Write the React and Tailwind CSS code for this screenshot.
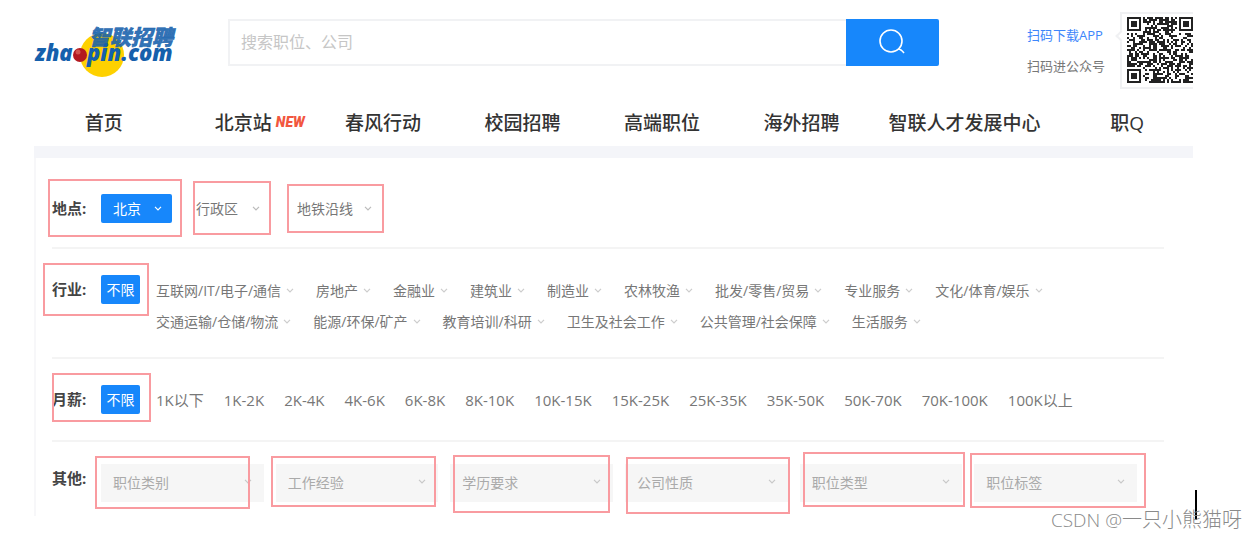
import React from 'react';

const navItems = [
  { name: '首页' },
  { name: '北京站', isNew: true },
  { name: '春风行动' },
  { name: '校园招聘' },
  { name: '高端职位' },
  { name: '海外招聘' },
  { name: '智联人才发展中心', wide: true },
  { name: '职Q' },
];

const industryRows = [
  ['互联网/IT/电子/通信', '房地产', '金融业', '建筑业', '制造业', '农林牧渔', '批发/零售/贸易', '专业服务', '文化/体育/娱乐'],
  ['交通运输/仓储/物流', '能源/环保/矿产', '教育培训/科研', '卫生及社会工作', '公共管理/社会保障', '生活服务'],
];

const salaries = [
  '1K以下', '1K-2K', '2K-4K', '4K-6K', '6K-8K', '8K-10K', '10K-15K',
  '15K-25K', '25K-35K', '35K-50K', '50K-70K', '70K-100K', '100K以上',
];

const otherFilters = ['职位类别', '工作经验', '学历要求', '公司性质', '职位类型', '职位标签'];

// Hand-drawn review marks that lie over the page
const marks = [
  'left-[48px] top-[179px] w-[134px] h-[58px]',
  'left-[193px] top-[181px] w-[78px] h-[54px]',
  'left-[287px] top-[184px] w-[97px] h-[49px]',
  'left-[43px] top-[263px] w-[106px] h-[53px]',
  'left-[52px] top-[373px] w-[99px] h-[49px]',
  'left-[95px] top-[456px] w-[155px] h-[53px]',
  'left-[271px] top-[456px] w-[165px] h-[51px]',
  'left-[453px] top-[455px] w-[157px] h-[58px]',
  'left-[626px] top-[457px] w-[164px] h-[57px]',
  'left-[803px] top-[452px] w-[162px] h-[55px]',
  'left-[970px] top-[453px] w-[176px] h-[55px]',
];

const Chevron = ({ className = '' }) => (
  <svg className={`pointer-events-none h-[5px] w-2 ${className}`} viewBox="0 0 8 5" fill="none" stroke="currentColor" strokeWidth="1.2">
    <path d="M1 0.8 L4 3.8 L7 0.8" />
  </svg>
);

const Logo = () => (
  <a href="#" aria-label="智联招聘" className="block">
    <svg className="block h-[60px] w-[148px]" viewBox="0 0 148 60">
      <circle cx="68" cy="34" r="22" fill="#fed100" />
      <text x="55" y="24" fontSize="21" fontWeight="900" fontStyle="italic" fill="#1560ac" fillOpacity="0.88" stroke="#1560ac" strokeWidth="0.5" fontFamily="'Noto Sans CJK SC', sans-serif">智联招聘</text>
      <text x="1" y="40" fontSize="22" fontWeight="800" fontStyle="italic" fill="#1560ac" fontFamily="'Open Sans', sans-serif">zha</text>
      <text x="53" y="40" fontSize="22" fontWeight="800" fontStyle="italic" fill="#1560ac" fontFamily="'Open Sans', sans-serif">pin.com</text>
      <circle cx="46" cy="34" r="7" fill="#b3191f" />
      <circle cx="44" cy="31" r="2.5" fill="#d2524c" />
    </svg>
  </a>
);

const QR_SIZE = 33;

const isFinder = (x, y) =>
  (x < 8 && y < 8) || (x >= QR_SIZE - 8 && y < 8) || (x < 8 && y >= QR_SIZE - 8);

const buildModules = () => {
  let seed = 20210;
  let d = '';
  for (let y = 0; y < QR_SIZE; y++) {
    for (let x = 0; x < QR_SIZE; x++) {
      seed = (seed * 1103515245 + 12345) % 2147483648;
      if (!isFinder(x, y) && seed / 2147483648 < 0.56) {
        d += `M${x} ${y}h1v1h-1z`;
      }
    }
  }
  return d;
};

const modules = buildModules();

const QrCode = () => (
  <svg className="block h-[66px] w-[66px]" viewBox="0 0 33 33" shapeRendering="crispEdges">
    <path d={modules} fill="#222" />
    {[[0, 0], [26, 0], [0, 26]].map(([x, y]) => (
      <g key={`${x}-${y}`} fill="#222">
        <rect x={x} y={y} width="7" height="7" />
        <rect x={x + 1} y={y + 1} width="5" height="5" fill="#fff" />
        <rect x={x + 2} y={y + 2} width="3" height="3" />
      </g>
    ))}
  </svg>
);

const FilterRow = ({ label, className, children }) => (
  <div className={`flex items-start ${className}`}>
    <span className="w-[49px] shrink-0 text-[15px] leading-[29px] font-bold text-[#444]">{label}:</span>
    {children}
  </div>
);

const Unlimited = () => (
  <button type="button" className="mr-4 h-[29px] w-[39px] shrink-0 rounded-xs bg-[#1787fb] text-sm text-white">
    不限
  </button>
);

const InlineSelect = ({ label, value, className, chevronClass }) => (
  <div className="relative">
    <select aria-label={label} className={`block h-[29px] appearance-none text-sm ${className}`}>
      <option>{value}</option>
    </select>
    <Chevron className={`absolute top-3 ${chevronClass}`} />
  </div>
);

const App = () => {
  return (
    <div className="relative bg-white pr-[65px] pb-6 pl-[34px] font-['Open_Sans','Noto_Sans_CJK_SC',sans-serif] text-[#777]">
      <header className="flex items-center pt-3 pb-[11px]">
        <Logo />
        <form className="mr-[88px] mb-[17px] ml-[46px] flex flex-1" onSubmit={(e) => e.preventDefault()}>
          <input
            type="text"
            aria-label="搜索职位、公司"
            placeholder="搜索职位、公司"
            className="h-[47px] min-w-0 flex-1 border-2 border-r-0 border-[#f1f2f4] px-[11px] text-base placeholder:text-[#c6c6c6] focus:outline-none"
          />
          <button type="submit" aria-label="搜索" className="flex h-[47px] w-[93px] items-center justify-center rounded-r-xs bg-[#1787fb] text-white">
            <svg className="h-7 w-7" viewBox="0 0 28 28" fill="none" stroke="currentColor" strokeWidth="1.6">
              <circle cx="13" cy="13" r="11" />
              <path d="M20 21 Q23 21 26 25" />
            </svg>
          </button>
        </form>
        <div className="flex flex-col text-[13px] leading-[31px]">
          <a href="#" className="text-[#3d86fb]">扫码下载APP</a>
          <a href="#" className="text-[#777]">扫码进公众号</a>
        </div>
        <div className="relative ml-[15px] border-2 border-r-0 border-[#f0f1f3] pt-[3px] pb-1 pl-[5px]">
          <span className="absolute top-[18px] -left-[5px] h-2 w-2 rotate-45 border-b-2 border-l-2 border-[#f0f1f3] bg-white" />
          <QrCode />
        </div>
      </header>

      <nav className="-mr-1 flex h-[46px] items-center text-[19px] font-medium text-[#333]">
        {navItems.map((item) => (
          <div key={item.name} className={`flex justify-center whitespace-nowrap ${item.wide ? 'flex-[4]' : 'flex-[3]'}`}>
            <a href="#" className="relative">
              {item.name}
              {item.isNew && (
                <span className="absolute top-0 left-full ml-1 font-['Roboto',sans-serif] text-sm leading-[26px] font-black text-[#f2573f] italic">
                  NEW
                </span>
              )}
            </a>
          </div>
        ))}
      </nav>

      <div className="h-3 bg-[#f4f5f9]" />

      <main className="border-l-2 border-[#f7f7f9] pr-[29px] pl-4">
        <FilterRow label="地点" className="border-b-2 border-[#f4f4f4] pt-9 pb-6">
          <div className="flex">
            <InlineSelect label="城市" value="北京" className="w-[71px] rounded-xs bg-[#1787fb] pl-3 text-white" chevronClass="right-[10px] text-white" />
            <div className="ml-6">
              <InlineSelect label="行政区" value="行政区" className="w-16" chevronClass="right-0 text-[#bbb]" />
            </div>
            <div className="ml-[37px]">
              <InlineSelect label="地铁沿线" value="地铁沿线" className="w-[75px]" chevronClass="right-0 text-[#bbb]" />
            </div>
          </div>
        </FilterRow>

        <FilterRow label="行业" className="border-b-2 border-[#f4f4f4] pt-[26px] pb-5">
          <Unlimited />
          <div className="text-sm leading-[31px]">
            {industryRows.map((row) => (
              <div key={row[0]} className="flex gap-[22px]">
                {row.map((name) => (
                  <button key={name} type="button" className="flex items-center gap-[5px] whitespace-nowrap">
                    {name}
                    <Chevron className="text-[#ccc]" />
                  </button>
                ))}
              </div>
            ))}
          </div>
        </FilterRow>

        <FilterRow label="月薪" className="border-b-2 border-[#f4f4f4] pt-[26px] pb-6">
          <Unlimited />
          <div className="flex gap-5 text-[15px] leading-[31px] whitespace-nowrap">
            {salaries.map((salary) => (
              <button key={salary} type="button">{salary}</button>
            ))}
          </div>
        </FilterRow>

        <FilterRow label="其他" className="pt-[22px] pb-[14px]">
          <div className="mr-[27px] flex flex-1 gap-3">
            {otherFilters.map((name) => (
              <div key={name} className="relative flex-1">
                <select aria-label={name} className="block h-[38px] w-full appearance-none bg-[#f6f6f6] px-3 text-sm text-[#aaa]">
                  <option>{name}</option>
                </select>
                <Chevron className="absolute top-[15px] right-3 text-[#c8c8c8]" />
              </div>
            ))}
          </div>
        </FilterRow>
      </main>

      {marks.map((mark) => (
        <span key={mark} className={`pointer-events-none absolute border-2 border-[#f99ba0] ${mark}`} />
      ))}

      <span className="absolute top-[490px] left-[1195px] h-[30px] w-[2px] bg-black" />
      <span className="absolute top-[506px] right-4 text-xl leading-7 font-light whitespace-nowrap text-[#8a8a8a]">
        <span className="text-[19px]">CSDN @</span>一只小熊猫呀
      </span>
    </div>
  );
};

export default App;
